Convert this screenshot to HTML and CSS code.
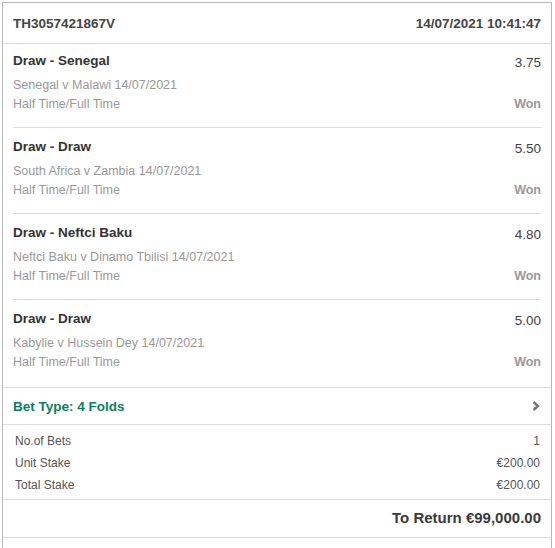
FILE: index.html
```html
<!DOCTYPE html>
<html lang="en">
<head>
    <meta charset="UTF-8">
    <meta name="viewport" content="width=device-width, initial-scale=1.0">
    <title>Bet Slip</title>
    <link rel="stylesheet" href="styles.css">
</head>
<body>

    <div class="slip">
        <!-- Header -->
        <div class="slip-head">
            <span>TH3057421867V</span>
            <span>14/07/2021 10:41:47</span>
        </div>

        <!-- Legs -->
        <div class="legs">
            <div class="leg">
                <div class="leg-top">
                    <span class="leg-title">Draw - Senegal</span>
                    <span class="leg-odds">3.75</span>
                </div>
                <div class="leg-event">Senegal v Malawi 14/07/2021</div>
                <div class="leg-market">
                    <span>Half Time/Full Time</span>
                    <span class="leg-result">Won</span>
                </div>
            </div>

            <div class="leg">
                <div class="leg-top">
                    <span class="leg-title">Draw - Draw</span>
                    <span class="leg-odds">5.50</span>
                </div>
                <div class="leg-event">South Africa v Zambia 14/07/2021</div>
                <div class="leg-market">
                    <span>Half Time/Full Time</span>
                    <span class="leg-result">Won</span>
                </div>
            </div>

            <div class="leg">
                <div class="leg-top">
                    <span class="leg-title">Draw - Neftci Baku</span>
                    <span class="leg-odds">4.80</span>
                </div>
                <div class="leg-event">Neftci Baku v Dinamo Tbilisi 14/07/2021</div>
                <div class="leg-market">
                    <span>Half Time/Full Time</span>
                    <span class="leg-result">Won</span>
                </div>
            </div>

            <div class="leg">
                <div class="leg-top">
                    <span class="leg-title">Draw - Draw</span>
                    <span class="leg-odds">5.00</span>
                </div>
                <div class="leg-event">Kabylie v Hussein Dey 14/07/2021</div>
                <div class="leg-market">
                    <span>Half Time/Full Time</span>
                    <span class="leg-result">Won</span>
                </div>
            </div>
        </div>

        <!-- Bet type -->
        <div class="bet-type">
            <span>Bet Type: 4 Folds</span>
            <svg class="chevron" width="8" height="10" viewBox="0 0 8 10">
                <polyline points="1.5,1 6,5 1.5,9" fill="none" stroke="#777" stroke-width="2.4"/>
            </svg>
        </div>

        <!-- Summary -->
        <div class="summary">
            <div class="summary-row"><span>No.of Bets</span><span>1</span></div>
            <div class="summary-row"><span>Unit Stake</span><span>€200.00</span></div>
            <div class="summary-row"><span>Total Stake</span><span>€200.00</span></div>
        </div>

        <div class="to-return">To Return €99,000.00</div>
        <div class="slip-foot"></div>
    </div>

</body>
</html>
```
FILE: styles.css
```css
body {
    font-family: "Liberation Sans", Arial, sans-serif;
    margin: 0;
    padding: 0;
    background: #fff;
}

.slip {
    margin: 2px 3px 0 2px;
    border: 1px solid #b8b8b8;
    border-bottom: none;
    color: #333;
}

.slip-head {
    display: flex;
    justify-content: space-between;
    align-items: center;
    height: 40px;
    padding: 0 10px 0 10px;
    border-bottom: 1px solid #dcdcdc;
    font-size: 13.5px;
    font-weight: bold;
    color: #444;
}

.leg {
    margin: 0 10px;
    padding: 10px 0 13px;
    border-bottom: 1px solid #dcdcdc;
}

.leg:first-child {
    padding-top: 8px;
}

.leg:last-child {
    padding-bottom: 15px;
    border-bottom: none;
}

.leg-top {
    display: flex;
    justify-content: space-between;
    height: 18px;
    line-height: 18px;
}

.leg-title {
    font-size: 13.5px;
    font-weight: bold;
    color: #333;
}

.leg-odds {
    font-size: 13.5px;
    color: #444;
    padding-top: 2px;
}

.leg-event,
.leg-market {
    font-size: 12.5px;
    line-height: 19px;
    color: #999;
}

.leg-event {
    margin-top: 6px;
}

.leg-market {
    display: flex;
    justify-content: space-between;
}

.leg-result {
    font-weight: bold;
}

.bet-type {
    display: flex;
    justify-content: space-between;
    align-items: center;
    height: 36px;
    padding: 0 11px 0 10px;
    border-top: 1px solid #dcdcdc;
    border-bottom: 1px solid #dcdcdc;
    font-size: 13.5px;
    font-weight: bold;
    color: #0b7f5f;
}

.summary {
    padding: 5px 11px 3px 12px;
    border-bottom: 1px solid #dcdcdc;
}

.summary-row {
    display: flex;
    justify-content: space-between;
    height: 22px;
    line-height: 22px;
    font-size: 12px;
    color: #555;
}

.to-return {
    height: 37px;
    line-height: 36px;
    padding-right: 10px;
    text-align: right;
    border-bottom: 1px solid #dcdcdc;
    font-size: 15px;
    font-weight: bold;
    color: #3a3a3a;
}

.slip-foot {
    height: 20px;
}
```
